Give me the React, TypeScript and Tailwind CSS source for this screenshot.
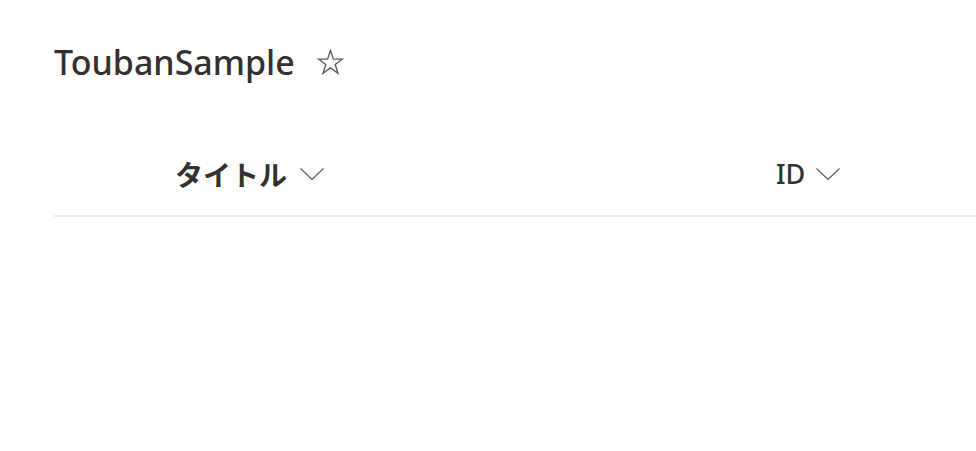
import React from 'react';

function Chevron({ gap }: { gap: string }) {
  return (
    <svg className={`${gap} h-[12px] w-[24px]`} viewBox="0 0 24 12" fill="none" stroke="#605e5c" strokeWidth="1.2">
      <path d="M0.5 0.5 L12 11.5 L23.5 0.5" />
    </svg>
  );
}

function Star() {
  return (
    <svg className="h-[26px] w-[27px]" viewBox="0 0 27 26" fill="none" stroke="#605e5c" strokeWidth="1.4" strokeLinejoin="miter">
      <path d="M13.5 1.5 L16.4 10.1 L25.5 10.1 L18.2 15.5 L21 24.3 L13.5 18.9 L6 24.3 L8.8 15.5 L1.5 10.1 L10.6 10.1 Z" />
    </svg>
  );
}

export default function App() {
  return (
    <main className="h-[451px] w-[976px] overflow-hidden bg-white text-[#323130] font-['Noto_Sans','Noto_Sans_CJK_JP',sans-serif]">
      <div className="pl-[54px] pt-[38px]">
        {/* list title */}
        <div className="flex h-[48px] items-center">
          <h1 className="text-[34px] leading-[48px] font-medium">ToubanSample</h1>
          <div className="ml-[22px] flex items-center">
            <Star />
          </div>
        </div>

        {/* column headers */}
        <div className="mt-[46px] flex h-[85px] items-center border-b-2 border-[#edebe9]">
          <div className="w-[121px]" />
          <div className="flex w-[601px] items-center">
            <span className="text-[28px] font-bold leading-[38px] font-['Noto_Sans_CJK_JP',sans-serif]">タイトル</span>
            <Chevron gap="ml-[13px]" />
          </div>
          <div className="flex items-center">
            <span className="text-[27px] font-medium leading-[38px]">ID</span>
            <Chevron gap="ml-[11px]" />
          </div>
        </div>
      </div>
    </main>
  );
}
